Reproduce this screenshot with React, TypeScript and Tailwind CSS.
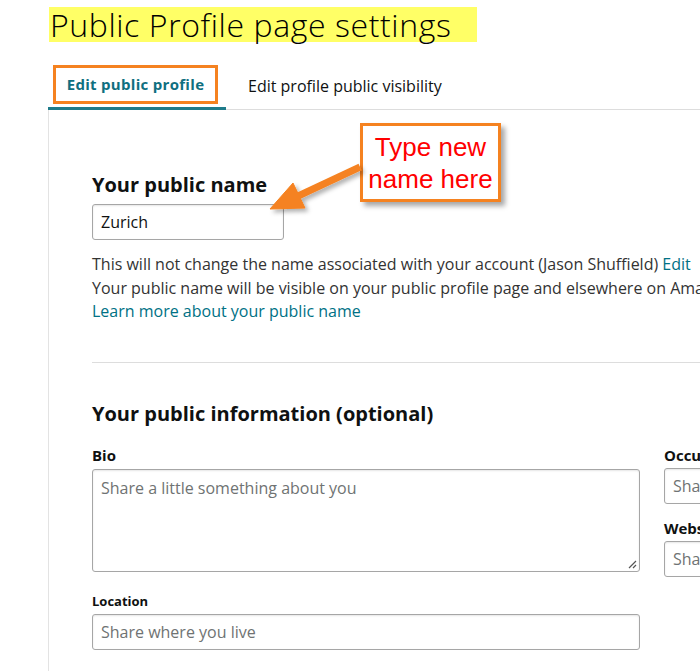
import React from 'react';

const teal = 'text-[#007185]';

function Field({
  label,
  placeholder,
  className = '',
  labelSize = 'text-[15px]',
}: {
  label: string;
  placeholder: string;
  className?: string;
  labelSize?: string;
}) {
  return (
    <div className={className}>
      <div className={`${labelSize} font-bold leading-[20px] text-[#0f1111]`}>{label}</div>
      <div className="mt-[3px] h-[36px] rounded-[3px] border border-[#a6a6a6] px-[8px] text-[16px] leading-[34px] text-[#6f7373] shadow-[inset_0_1px_2px_rgba(0,0,0,0.1)] whitespace-nowrap overflow-hidden">
        {placeholder}
      </div>
    </div>
  );
}

export default function App() {
  return (
    <div className="relative h-[671px] w-[700px] overflow-hidden bg-white font-['Open_Sans',sans-serif] text-[#0f1111]">
      <div className="pl-[49px] pt-[7px]">
        <h1 className="inline-block bg-[#ffff66] pl-[1px] pr-[26px] text-[32px] font-light leading-[35px] tracking-[0.6px] text-black">
          Public Profile page settings
        </h1>
      </div>

      <div className="ml-[48px] mt-[22px] flex border-b border-[#dddddd]">
        <div className="-mb-[1px] w-[178px] border-b-[3px] border-[#1e7b8a] pb-[3px] pl-[5px]">
          <div className="flex h-[39px] w-[165px] items-center justify-center border-[3px] border-[#f58220] text-[15px] font-bold tracking-[0.3px] text-[#0f6f80]">
            Edit public profile
          </div>
        </div>
        <div className="flex h-[42px] items-center pl-[22px] text-[16px] text-[#0f1111]">
          Edit profile public visibility
        </div>
      </div>

      <div className="ml-[48px] h-[600px] border-l border-[#e3e3e3] pl-[43px] pt-[62px]">
        <h2 className="text-[20px] font-bold leading-[26px]">Your public name</h2>
        <div className="mt-[6px] flex h-[36px] w-[192px] items-center rounded-[3px] border border-[#a6a6a6] px-[8px] text-[16px] shadow-[inset_0_1px_2px_rgba(0,0,0,0.1)]">
          Zurich
        </div>
        <div className="mt-[13px] whitespace-nowrap text-[16px] leading-[23.5px] text-[#333333]">
          <p>
            This will not change the name associated with your account (Jason Shuffield){' '}
            <span className={teal}>Edit</span>
          </p>
          <p>Your public name will be visible on your public profile page and elsewhere on Amazon.</p>
          <p className={teal}>Learn more about your public name</p>
        </div>
        <div className="mt-[38px] border-t border-[#dddddd]" />

        <h2 className="mt-[38px] text-[20px] font-bold leading-[26px]">Your public information (optional)</h2>

        <div className="mt-[18px] flex gap-[24px]">
          <div className="w-[548px] shrink-0">
            <div className="text-[15px] font-bold leading-[20px]">Bio</div>
            <div className="relative mt-[4px] h-[103px] rounded-[3px] border border-[#a6a6a6] px-[8px] pt-[6px] text-[16px] text-[#6f7373] shadow-[inset_0_1px_2px_rgba(0,0,0,0.1)]">
              Share a little something about you
              <svg className="absolute bottom-[2px] right-[2px]" width="10" height="10" viewBox="0 0 10 10">
                <path d="M9 2 L2 9 M9 6 L6 9" stroke="#555" strokeWidth="1.2" />
              </svg>
            </div>
            <Field className="mt-[19px]" labelSize="text-[13px]" label="Location" placeholder="Share where you live" />
          </div>
          <div className="w-[140px] shrink-0">
            <Field label="Occupation" placeholder="Share your occupation" />
            <Field className="mt-[14px]" label="Website" placeholder="Share your website" />
          </div>
        </div>
      </div>

      {/* annotation */}
      <div className="absolute left-[360px] top-[123px] flex h-[79px] w-[141px] flex-col items-center justify-center border-[3px] border-[#f58220] bg-white font-['Liberation_Sans',Arial,sans-serif] text-[26px] leading-[32px] text-[#ff0000] shadow-[4px_4px_5px_rgba(0,0,0,0.35)]">
        <span>Type new</span>
        <span>name here</span>
      </div>
      <svg className="absolute left-0 top-0" width="700" height="671" viewBox="0 0 700 671">
        <defs>
          <filter id="sh" x="-20%" y="-20%" width="140%" height="140%">
            <feDropShadow dx="3" dy="3" stdDeviation="2" floodColor="#000" floodOpacity="0.3" />
          </filter>
        </defs>
        <g filter="url(#sh)" fill="#f58220" stroke="#f58220">
          <line x1="360" y1="167" x2="296" y2="197" strokeWidth="7" />
          <polygon points="270,209 293,183 305,208" strokeWidth="1" />
        </g>
      </svg>
    </div>
  );
}
